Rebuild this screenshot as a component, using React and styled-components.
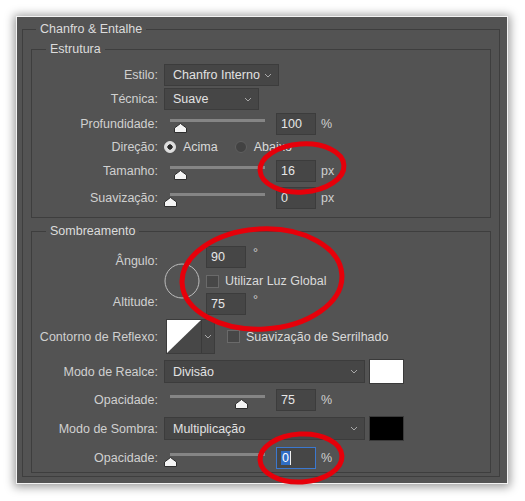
import React from 'react';
import styled, { createGlobalStyle } from 'styled-components';

const GlobalStyle = createGlobalStyle`
  body {
    margin: 0;
    background: #fff;
    font-family: "Liberation Sans", Arial, sans-serif;
  }
`;

const Page = styled.div`
  position: relative;
  width: 525px;
  height: 501px;
  box-sizing: border-box;
  padding: 16px 0 0 16px;
`;

const Dialog = styled.div`
  width: 492px;
  height: 468px;
  box-sizing: border-box;
  background: #535353;
  border: 1px solid #f2f2f2;
  box-shadow: 0 1px 9px 2px rgba(0, 0, 0, 0.4);
  padding: 4px 7px 0 5px;
  color: #d2d2d2;
  font-size: 12.5px;
`;

const Group = styled.fieldset`
  margin: ${({ mt }) => mt || 0}px 0 0;
  padding: ${({ pad }) => pad};
  border: 1px solid #3e3e3e;
  min-width: 0;
`;

const Legend = styled.legend`
  padding: 0 4px;
  margin-left: ${({ ml }) => ml}px;
  line-height: 16px;
  color: #dcdcdc;
`;

const Row = styled.div`
  display: grid;
  grid-template-columns: 126px 1fr;
  column-gap: 6px;
  align-items: center;
  height: ${({ h }) => h || 22}px;
  margin-top: ${({ mt }) => mt || 0}px;
`;

const Label = styled.span`
  text-align: right;
  white-space: nowrap;
  color: #d0d0d0;
`;

const Controls = styled.div`
  display: flex;
  align-items: center;
  height: 100%;
`;

const SelectBox = styled.div`
  display: flex;
  align-items: center;
  justify-content: space-between;
  width: ${({ w }) => w}px;
  height: ${({ h }) => h || 22}px;
  box-sizing: border-box;
  background: #464646;
  border: 1px solid #3c3c3c;
  padding: 0 6px 0 8px;
  color: #e2e2e2;
`;

const ChevronSvg = styled.svg`
  flex: none;
`;

const Chevron = () => (
  <ChevronSvg width="8" height="5" viewBox="0 0 8 5">
    <path d="M1 1 L4 4 L7 1" fill="none" stroke="#a8a8a8" strokeWidth="1" />
  </ChevronSvg>
);

const Select = ({ w, h, children }) => (
  <SelectBox w={w} h={h}>
    <span>{children}</span>
    <Chevron />
  </SelectBox>
);

const SliderBox = styled.div`
  position: relative;
  width: 106px;
  height: 22px;
  flex: none;
`;

const Track = styled.div`
  position: absolute;
  left: 6px;
  right: 5px;
  top: 6px;
  height: 3px;
  background: #858585;
`;

const Thumb = styled.svg`
  position: absolute;
  top: 10px;
`;

const Slider = ({ value }) => (
  <SliderBox>
    <Track />
    <Thumb width="13" height="10" viewBox="0 0 13 10" style={{ left: `${value * 95}px` }}>
      <polygon points="6.5,0.5 12.5,5 12.5,9.5 0.5,9.5 0.5,5" fill="#f4f4f4" stroke="#2e2e2e" strokeWidth="1" />
    </Thumb>
  </SliderBox>
);

const NumBox = styled.div`
  display: flex;
  align-items: center;
  width: 40px;
  height: 22px;
  box-sizing: border-box;
  margin-left: ${({ ml }) => (ml === undefined ? 6 : ml)}px;
  padding-left: 4px;
  background: #464646;
  border: 1px solid ${({ focus }) => (focus ? '#3b78d0' : '#3c3c3c')};
  color: #e6e6e6;
  flex: none;
`;

const Selected = styled.span`
  background: #2f6dc4;
  color: #fff;
  padding: 0 1px;
`;

const Caret = styled.span`
  width: 1px;
  height: 14px;
  background: #f0f0f0;
`;

const Unit = styled.span`
  margin-left: ${({ ml }) => ml || 5}px;
  color: #d0d0d0;
  align-self: ${({ top }) => (top ? 'flex-start' : 'center')};
  line-height: ${({ top }) => (top ? '14px' : 'normal')};
`;

const Radio = styled.span`
  width: 12px;
  height: 12px;
  box-sizing: border-box;
  border-radius: 50%;
  flex: none;
  margin-left: ${({ ml }) => ml || 0}px;
  background: ${({ on }) =>
    on ? 'radial-gradient(circle, #2a2a2a 0 2.4px, #dedede 2.9px)' : '#424242'};
  border: 1px solid ${({ on }) => (on ? '#e0e0e0' : '#5f5f5f')};
`;

const OptionText = styled.span`
  margin-left: ${({ ml }) => ml || 7}px;
  color: #dadada;
  white-space: nowrap;
`;

const Check = styled.span`
  width: 13px;
  height: 13px;
  box-sizing: border-box;
  flex: none;
  margin-left: ${({ ml }) => ml || 0}px;
  background: #474747;
  border: 1px solid #6a6a6a;
`;

const AngleRow = styled.div`
  display: grid;
  grid-template-columns: 126px 36px auto;
  column-gap: 6px;
  height: 68px;
`;

const AngleLabels = styled.div`
  display: flex;
  flex-direction: column;
  justify-content: space-between;
  align-items: flex-end;
  padding: 7px 0 5px;
  line-height: 16px;
  color: #d0d0d0;
`;

const Dial = styled.svg`
  align-self: center;
  margin-top: 1px;
`;

const AngleFields = styled.div`
  display: flex;
  flex-direction: column;
`;

const FieldLine = styled.div`
  display: flex;
  align-items: center;
  height: ${({ h }) => h || 22}px;
  margin-top: ${({ mt }) => mt || 0}px;
`;

const ContourBox = styled.div`
  display: flex;
  height: 35px;
  margin-left: 2px;
  border: 1px solid #3c3c3c;
  box-sizing: border-box;
`;

const ContourArrow = styled.div`
  display: flex;
  align-items: center;
  justify-content: center;
  width: 12px;
  background: #464646;
  border-left: 1px solid #3a3a3a;
`;

const Swatch = styled.div`
  width: 35px;
  height: 25px;
  box-sizing: border-box;
  margin-left: 4px;
  background: ${({ color }) => color};
  border: 1px solid #3a3a3a;
`;

const Annotations = styled.svg`
  position: absolute;
  left: 0;
  top: 0;
  pointer-events: none;
`;

const SliderRow = ({ label, value, num, unit, mt, focus }) => (
  <Row mt={mt}>
    <Label>{label}</Label>
    <Controls>
      <Slider value={value} />
      <NumBox focus={focus}>{num}</NumBox>
      <Unit>{unit}</Unit>
    </Controls>
  </Row>
);

export default function App() {
  return (
    <>
      <GlobalStyle />
      <Page>
        <Dialog>
          <Group pad="4px 8px 3px">
            <Legend ml={5}>Chanfro &amp; Entalhe</Legend>

            <Group pad="7px 0 8px">
              <Legend ml={14}>Estrutura</Legend>
              <Row>
                <Label>Estilo:</Label>
                <Controls>
                  <Select w={115}>Chanfro Interno</Select>
                </Controls>
              </Row>
              <Row mt={2}>
                <Label>Técnica:</Label>
                <Controls>
                  <Select w={95}>Suave</Select>
                </Controls>
              </Row>
              <SliderRow label="Profundidade:" value={0.1} num="100" unit="%" mt={3} />
              <Row mt={1}>
                <Label>Direção:</Label>
                <Controls>
                  <Radio on />
                  <OptionText>Acima</OptionText>
                  <Radio ml={17} />
                  <OptionText>Abaixo</OptionText>
                </Controls>
              </Row>
              <SliderRow label="Tamanho:" value={0.11} num="16" unit="px" mt={2} />
              <SliderRow label="Suavização:" value={0} num="0" unit="px" mt={5} />
            </Group>

            <Group mt={5} pad="7px 0 3px">
              <Legend ml={14}>Sombreamento</Legend>
              <AngleRow>
                <AngleLabels>
                  <span>Ângulo:</span>
                  <span>Altitude:</span>
                </AngleLabels>
                <Dial width="36" height="36" viewBox="0 0 36 36">
                  <circle cx="18" cy="18" r="17" fill="none" stroke="#bdbdbd" strokeWidth="1" />
                  <line x1="18" y1="15" x2="18" y2="19" stroke="#9a9a9a" strokeWidth="1" />
                </Dial>
                <AngleFields>
                  <FieldLine>
                    <NumBox ml={0}>90</NumBox>
                    <Unit ml={7} top>°</Unit>
                  </FieldLine>
                  <FieldLine h={16} mt={5}>
                    <Check />
                    <OptionText ml={6}>Utilizar Luz Global</OptionText>
                  </FieldLine>
                  <FieldLine mt={4}>
                    <NumBox ml={0}>75</NumBox>
                    <Unit ml={7} top>°</Unit>
                  </FieldLine>
                </AngleFields>
              </AngleRow>
              <Row h={35} mt={5}>
                <Label>Contorno de Reflexo:</Label>
                <Controls>
                  <ContourBox>
                    <svg width="34" height="33" viewBox="0 0 34 33">
                      <rect width="34" height="33" fill="#474747" />
                      <polygon points="0,0 34,0 0,33" fill="#ffffff" />
                    </svg>
                    <ContourArrow>
                      <Chevron />
                    </ContourArrow>
                  </ContourBox>
                  <Check ml={12} />
                  <OptionText ml={6}>Suavização de Serrilhado</OptionText>
                </Controls>
              </Row>
              <Row h={25} mt={5}>
                <Label>Modo de Realce:</Label>
                <Controls>
                  <Select w={201} h={23}>Divisão</Select>
                  <Swatch color="#ffffff" />
                </Controls>
              </Row>
              <SliderRow label="Opacidade:" value={0.75} num="75" unit="%" mt={5} />
              <Row h={25} mt={5}>
                <Label>Modo de Sombra:</Label>
                <Controls>
                  <Select w={201} h={23}>Multiplicação</Select>
                  <Swatch color="#000000" />
                </Controls>
              </Row>
              <Row mt={6}>
                <Label>Opacidade:</Label>
                <Controls>
                  <Slider value={0} />
                  <NumBox focus>
                    <Selected>0</Selected>
                    <Caret />
                  </NumBox>
                  <Unit>%</Unit>
                </Controls>
              </Row>
            </Group>
          </Group>
        </Dialog>

        <Annotations width="525" height="501" viewBox="0 0 525 501">
          <g fill="none" stroke="#e6000a" strokeWidth="5">
            <ellipse cx="302" cy="168" rx="42" ry="24" transform="rotate(-4 302 168)" />
            <ellipse cx="262" cy="279" rx="80" ry="50" transform="rotate(-3 262 279)" />
            <ellipse cx="301" cy="458" rx="41" ry="24" transform="rotate(-3 301 458)" />
          </g>
        </Annotations>
      </Page>
    </>
  );
}
